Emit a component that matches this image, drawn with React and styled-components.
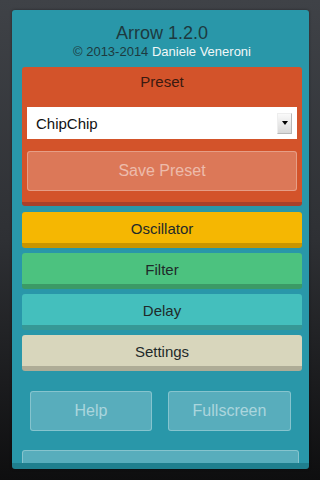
import React from "react";
import styled, { createGlobalStyle } from "styled-components";

const Global = createGlobalStyle`
  html, body { margin: 0; padding: 0; }
  body {
    width: 320px;
    height: 480px;
    overflow: hidden;
    background: linear-gradient(to bottom, #3f4247 0%, #2e3034 50%, #0e0e0f 100%);
    font-family: "Liberation Sans", Arial, sans-serif;
  }
`;

const Panel = styled.div`
  box-sizing: border-box;
  margin: 10px 11px 0 12px;
  width: 297px;
  height: 459px;
  background: #2997a9;
  border-radius: 3px;
  border-bottom: 6px solid #1f7f8e;
  padding: 0 7px 0 10px;
  display: flex;
  flex-direction: column;
  overflow: hidden;
  box-shadow: 0 0 3px rgba(0,0,0,0.4);
  & > * { flex-shrink: 0; }
`;

const Header = styled.div`
  box-sizing: border-box;
  display: flex;
  flex-direction: column;
  align-items: center;
  padding-top: 13px;
  height: 57px;
`;

const Title = styled.div`
  font-size: 18px;
  line-height: 20px;
  color: #1d3a40;
`;

const Copy = styled.div`
  font-size: 13px;
  line-height: 18px;
  color: #1d3a40;
  span { color: #f2f7f8; }
`;

const PresetBox = styled.div`
  background: #d3532a;
  border-radius: 3px;
  border-bottom: 4px solid #a9412a;
  padding: 0 5px 11px;
  display: flex;
  flex-direction: column;
`;

const BoxTitle = styled.div`
  height: 40px;
  line-height: 30px;
  text-align: center;
  font-size: 15px;
  color: #3a1a10;
`;

const Select = styled.div`
  height: 32px;
  background: #fff;
  display: flex;
  align-items: center;
  justify-content: space-between;
  padding: 0 5px 0 9px;
  font-size: 15px;
  color: #111;
`;

const Arrow = styled.div`
  width: 15px;
  height: 21px;
  box-sizing: border-box;
  background: linear-gradient(to bottom, #fafafa, #d8d8d8);
  border: 1px solid #b8b8b8;
  border-top-color: #eee;
  border-left-color: #eee;
  display: flex;
  align-items: center;
  justify-content: center;
  &::after {
    content: "";
    border-left: 3px solid transparent;
    border-right: 3px solid transparent;
    border-top: 4px solid #000;
  }
`;

const GhostButton = styled.div`
  box-sizing: border-box;
  height: 40px;
  margin-top: ${p => p.$mt || 0}px;
  background: rgba(255,255,255,0.22);
  border: 1px solid rgba(255,255,255,0.28);
  border-radius: 3px;
  color: rgba(255,255,255,0.5);
  font-size: 16px;
  display: flex;
  align-items: center;
  justify-content: center;
  flex: ${p => p.$flex ? "0 0 " + p.$flex + "px" : "none"};
`;

const Sections = styled.div`
  display: flex;
  flex-direction: column;
  gap: 5px;
  margin-top: 6px;
`;

const Section = styled.div`
  box-sizing: border-box;
  height: 36px;
  background: ${p => p.$bg};
  border-bottom: 5px solid ${p => p.$shade};
  border-radius: 3px;
  display: flex;
  align-items: center;
  justify-content: center;
  font-size: 15px;
  color: #1f2a2a;
  padding-top: 1px;
`;

const Row = styled.div`
  display: flex;
  justify-content: space-between;
  padding: 0 11px 0 8px;
  margin-top: 20px;
`;

const BottomBar = styled.div`
  box-sizing: border-box;
  margin-top: 19px;
  margin-right: 3px;
  height: 30px;
  background: rgba(255,255,255,0.22);
  border: 1px solid rgba(255,255,255,0.28);
  border-radius: 3px;
`;

export default function App() {
  return (
    <>
      <Global />
      <Panel>
        <Header>
          <Title>Arrow 1.2.0</Title>
          <Copy>© 2013-2014 <span>Daniele Veneroni</span></Copy>
        </Header>
        <PresetBox>
          <BoxTitle>Preset</BoxTitle>
          <Select>
            ChipChip
            <Arrow />
          </Select>
          <GhostButton $mt={12}>Save Preset</GhostButton>
        </PresetBox>
        <Sections>
          <Section $bg="#f5b702" $shade="#c99500">Oscillator</Section>
          <Section $bg="#4cc27f" $shade="#3b9a66">Filter</Section>
          <Section $bg="#44bfbd" $shade="#369896">Delay</Section>
          <Section $bg="#d8d6bc" $shade="#aeac96">Settings</Section>
        </Sections>
        <Row>
          <GhostButton $flex={122}>Help</GhostButton>
          <GhostButton $flex={123}>Fullscreen</GhostButton>
        </Row>
        <BottomBar />
      </Panel>
    </>
  );
}
